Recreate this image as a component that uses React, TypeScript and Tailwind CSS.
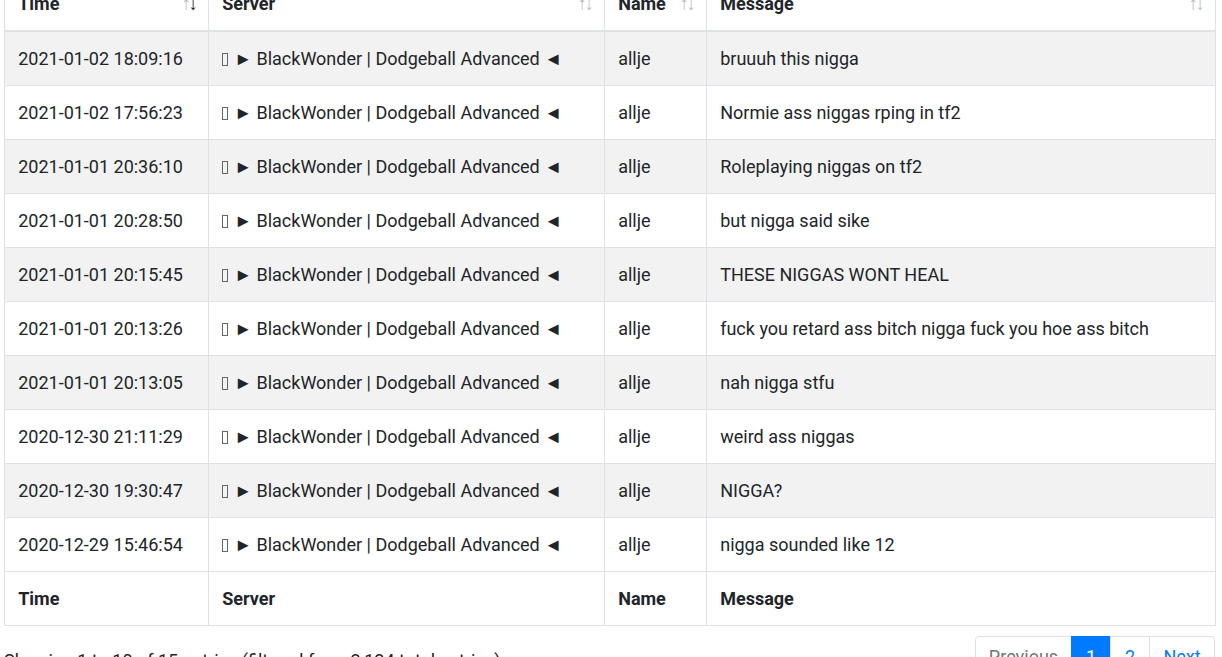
import React from "react";

const rows: [string, string][] = [
  ["2021-01-02 18:09:16", "bruuuh this nigga"],
  ["2021-01-02 17:56:23", "Normie ass niggas rping in tf2"],
  ["2021-01-01 20:36:10", "Roleplaying niggas on tf2"],
  ["2021-01-01 20:28:50", "but nigga said sike"],
  ["2021-01-01 20:15:45", "THESE NIGGAS WONT HEAL"],
  ["2021-01-01 20:13:26", "fuck you retard ass bitch nigga fuck you hoe ass bitch"],
  ["2021-01-01 20:13:05", "nah nigga stfu"],
  ["2020-12-30 21:11:29", "weird ass niggas"],
  ["2020-12-30 19:30:47", "NIGGA?"],
  ["2020-12-29 15:46:54", "nigga sounded like 12"],
];

function SortIcons({ active }: { active?: boolean }) {
  return (
    <>
      <span className="absolute right-[17px] top-1/2 -translate-y-1/2 text-[19px] text-[#212529] opacity-30 font-normal">↑</span>
      <span className={"absolute right-[10px] top-1/2 -translate-y-1/2 text-[19px] text-[#212529] font-normal " + (active ? "opacity-100" : "opacity-30")}>↓</span>
    </>
  );
}

function Tofu() {
  return <span className="inline-block w-[6px] h-[13px] border border-[#666] align-[-1px] mr-[6px]" />;
}

export default function App() {
  const th = "relative border border-[#dee2e6] px-[13.2px] py-[13.5px] leading-[26px] text-left font-bold";
  const td = "border border-[#dee2e6] px-[13.2px] py-[13.5px] leading-[26px] whitespace-nowrap";
  return (
    <div className="bg-white w-[1222px] h-[657px] overflow-hidden text-[#212529] text-[18px]" style={{ fontFamily: "Roboto, 'Liberation Sans', sans-serif" }}>
      <div className="ml-[4px] w-[1211px] -mt-[24px]">
        <table className="w-full table-fixed border-collapse">
          <colgroup>
            <col className="w-[204px]" />
            <col className="w-[396px]" />
            <col className="w-[102px]" />
            <col className="w-[509px]" />
          </colgroup>
          <thead>
            <tr>
              <th className={th + " border-b-2"}>Time<SortIcons active /></th>
              <th className={th + " border-b-2"}>Server<SortIcons /></th>
              <th className={th + " border-b-2"}>Name<SortIcons /></th>
              <th className={th + " border-b-2"}>Message<SortIcons /></th>
            </tr>
          </thead>
          <tbody>
            {rows.map(([t, m], i) => (
              <tr key={i} className={i % 2 === 0 ? "bg-[#f2f2f2]" : "bg-white"}>
                <td className={td}>{t}</td>
                <td className={td}><Tofu />► BlackWonder | Dodgeball Advanced ◄</td>
                <td className={td}>allje</td>
                <td className={td}>{m}</td>
              </tr>
            ))}
          </tbody>
          <tfoot>
            <tr>
              <th className={th}>Time</th>
              <th className={th}>Server</th>
              <th className={th}>Name</th>
              <th className={th}>Message</th>
            </tr>
          </tfoot>
        </table>
        <div className="flex justify-between items-start mt-[7px]">
          <div className="pt-[15px] leading-[26px]">Showing 1 to 10 of 15 entries (filtered from 2,124 total entries)</div>
          <ul className="flex mt-[3px] leading-[22px] text-center">
            <li className="w-[97px] py-[8.8px] border border-[#dee2e6] rounded-l-[4px] text-[#6c757d] bg-white">Previous</li>
            <li className="w-[40px] py-[8.8px] border border-[#007bff] bg-[#007bff] text-white -ml-px">1</li>
            <li className="w-[40px] py-[8.8px] border border-[#dee2e6] text-[#007bff] -ml-px">2</li>
            <li className="w-[66px] py-[8.8px] border border-[#dee2e6] rounded-r-[4px] text-[#007bff] -ml-px">Next</li>
          </ul>
        </div>
      </div>
    </div>
  );
}
